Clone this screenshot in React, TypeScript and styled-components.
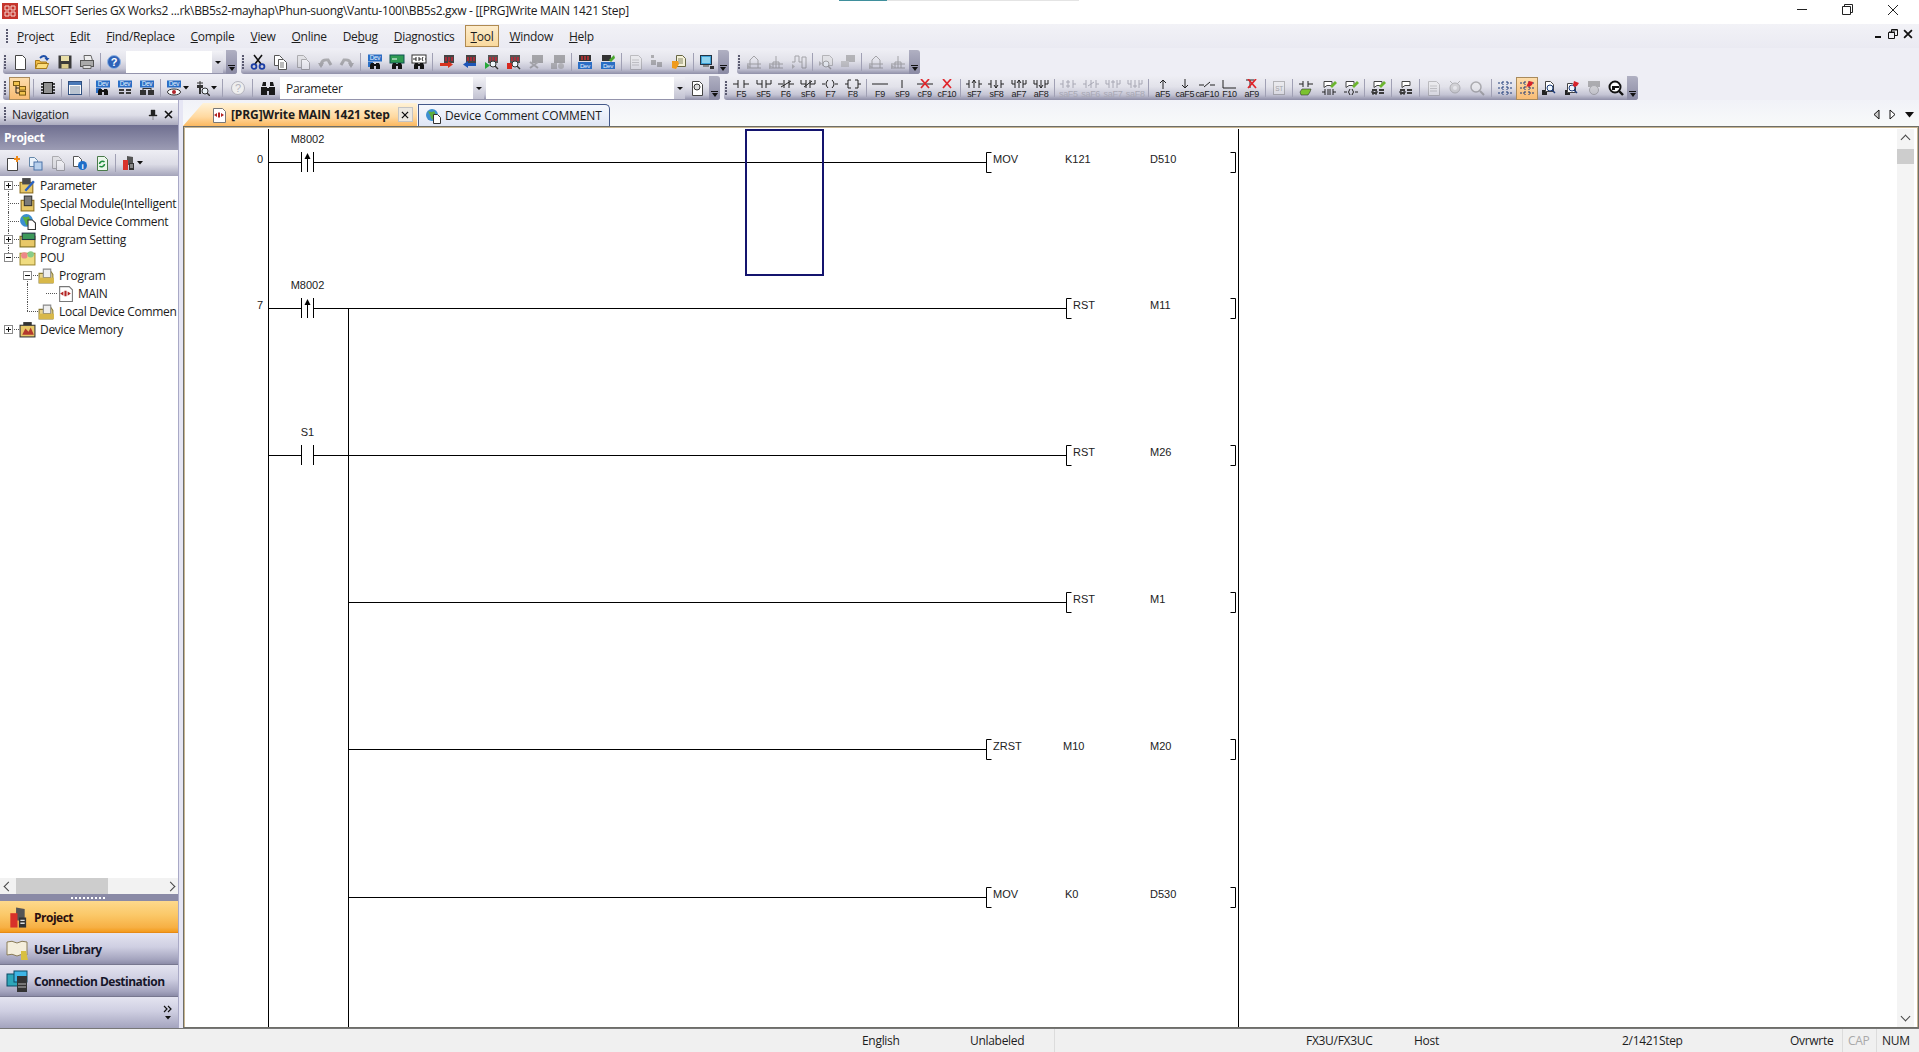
import React from "react";
import styled, { createGlobalStyle } from "styled-components";

const UI_FONT = `"Open Sans", "Noto Sans", "Liberation Sans", sans-serif`;
const DRAW_FONT = `"Liberation Sans", Arial, sans-serif`;

const GlobalStyle = createGlobalStyle`
  html, body { margin: 0; padding: 0; background: #eeeef5; overflow: hidden; }
  #root { width: 1919px; height: 1052px; }
  * { box-sizing: border-box; }
`;

const Page = styled.div`
  position: relative;
  width: 1919px;
  height: 1052px;
  display: flex;
  flex-direction: column;
  font-family: ${UI_FONT};
  font-size: 12px;
  letter-spacing: -0.3px;
  color: #1c1c1c;
  background: #eeeef5;
  overflow: hidden;
`;

/* title bar */
const TitleBar = styled.div`
  position: relative;
  height: 24px;
  background: #fff;
  display: flex;
  align-items: center;
  padding-left: 2px;
  flex: none;
`;
const TaskStrip = styled.div`
  position: absolute;
  top: 0;
  left: 839px;
  width: 48px;
  height: 1px;
  background: #3f8f9c;
  box-shadow: 48px 0 0 #e4e4e4, 96px 0 0 #e4e4e4, 144px 0 0 #e4e4e4, 192px 0 0 #e4e4e4;
`;
const TitleText = styled.span`
  margin-left: 4px;
  white-space: nowrap;
  margin-top: -3px;
`;
const WindowButtons = styled.div`
  margin-left: auto;
  display: flex;
  margin-top: -4px;
  padding-right: 3px;
`;
const WindowButton = styled.span`
  width: 45.5px;
  display: flex;
  justify-content: center;
`;

/* menu bar */
const MenuBar = styled.div`
  height: 24px;
  flex: none;
  display: flex;
  align-items: center;
  padding-left: 5px;
  background: linear-gradient(#f2f2f7, #eaeaf2);
`;
const Grip = styled.span`
  flex: none;
  width: 3px;
  height: 15px;
  margin: 0 2px 0 1px;
  background-image: radial-gradient(circle at 1px 1px, #5a5a70 1px, transparent 1.2px);
  background-size: 3px 3px;
`;
const MenuItem = styled.span<{ $active?: boolean }>`
  height: 22px;
  padding: 0 5px;
  margin-right: 4px;
  display: flex;
  align-items: center;
  white-space: nowrap;
  border: 1px solid ${(p) => (p.$active ? "#b08a50" : "transparent")};
  background: ${(p) => (p.$active ? "linear-gradient(#fdeccb, #f9d99e)" : "transparent")};
`;
const MdiButtons = styled.div`
  margin-left: auto;
  display: flex;
  gap: 5px;
  padding-right: 6px;
  margin-top: -4px;
`;

/* toolbars */
const ToolRow = styled.div`
  height: 24px;
  margin-top: 2px;
  flex: none;
  display: flex;
  align-items: stretch;
  padding-left: 3px;
`;
const Toolbar = styled.div<{ $gap?: number }>`
  display: flex;
  align-items: center;
  height: 24px;
  margin-right: ${(p) => p.$gap ?? 4}px;
  border-radius: 3px;
  background: linear-gradient(#eeeef4 0%, #e2e2ea 45%, #c4c4d4 78%, #8f8fa8 100%);
`;
const Slot = styled.span<{ $active?: boolean; $w?: number }>`
  flex: none;
  width: ${(p) => p.$w ?? 22.3}px;
  height: 23px;
  display: flex;
  align-items: center;
  justify-content: center;
  border: 1px solid ${(p) => (p.$active ? "#a98a5c" : "transparent")};
  background: ${(p) => (p.$active ? "linear-gradient(#fddcaa, #f7bc74)" : "transparent")};
`;
const Sep = styled.span<{ $w?: number }>`
  flex: none;
  width: ${(p) => p.$w ?? 5}px;
  height: 18px;
  display: flex;
  justify-content: center;
  &::after {
    content: "";
    width: 1px;
    height: 100%;
    background: #a0a0b4;
  }
`;
const Overflow = styled.span<{ $ml?: number }>`
  flex: none;
  width: 11px;
  height: 24px;
  margin-left: ${(p) => p.$ml ?? 0}px;
  border-radius: 0 3px 3px 0;
  background: linear-gradient(#b0b0c2, #8a8aa4);
  display: flex;
  flex-direction: column;
  align-items: center;
  justify-content: flex-end;
  padding-bottom: 3px;
  &::before {
    content: "";
    width: 7px;
    height: 1px;
    background: #111;
    margin-bottom: 1px;
  }
  &::after {
    content: "";
    border-left: 3.5px solid transparent;
    border-right: 3.5px solid transparent;
    border-top: 4px solid #111;
  }
`;
const Combo = styled.span<{ $w: number; $ml?: number }>`
  flex: none;
  width: ${(p) => p.$w}px;
  margin-left: ${(p) => p.$ml ?? 0}px;
  height: 22px;
  background: #fff;
  display: flex;
  align-items: center;
  justify-content: space-between;
  padding-left: 6px;
  white-space: nowrap;
  font-size: 12px;
`;
const ComboArrow = styled.span`
  width: 11px;
  height: 22px;
  background: linear-gradient(#f2f2f6, #c2c2d2);
  display: flex;
  align-items: center;
  justify-content: center;
  &::after {
    content: "";
    border-left: 3px solid transparent;
    border-right: 3px solid transparent;
    border-top: 3px solid #111;
  }
`;
const KeyLabel = styled.span<{ $muted?: boolean }>`
  display: block;
  font-family: ${DRAW_FONT};
  font-size: 9px;
  line-height: 10px;
  letter-spacing: -0.3px;
  color: ${(p) => (p.$muted ? "#a8a8b4" : "#222")};
  white-space: nowrap;
`;
const KeySlot = styled(Slot)`
  flex-direction: column;
  justify-content: flex-start;
  padding-top: 1px;
`;

/* main area */
const Main = styled.div`
  flex: 1;
  min-height: 0;
  display: flex;
`;
const Nav = styled.div`
  flex: none;
  width: 179px;
  padding-top: 3px;
  display: flex;
  flex-direction: column;
  background: #fff;
  border-right: 1px solid #a9a9c6;
`;
const NavHeader = styled.div`
  height: 22px;
  flex: none;
  display: flex;
  align-items: center;
  padding-left: 3px;
  font-size: 12px;
  background: linear-gradient(#ecedf3, #dedee8 55%, #aaaabe);
`;
const NavTitle = styled.span`
  margin-left: 3px;
`;
const NavClose = styled.span`
  margin-left: auto;
  display: flex;
  gap: 6px;
  padding-right: 5px;
  align-items: center;
`;
const ProjectHeader = styled.div`
  height: 25px;
  flex: none;
  display: flex;
  align-items: center;
  padding-left: 4px;
  color: #fff;
  font-weight: 700;
  font-size: 12px;
  background: linear-gradient(#6f6f90, #9c9cb4);
`;
const NavTools = styled.div`
  height: 26px;
  flex: none;
  display: flex;
  align-items: center;
  padding-left: 2px;
  background: linear-gradient(#eeeef4, #dcdce6 55%, #a4a4ba);
`;
const Tree = styled.div`
  flex: 1;
  min-height: 0;
  overflow: hidden;
  background: #fff;
`;
const TreeRow = styled.div`
  height: 18px;
  display: flex;
  align-items: center;
  white-space: nowrap;
  font-size: 12px;
`;
const Guide = styled.span<{ $up?: boolean; $down?: boolean; $right?: boolean }>`
  position: relative;
  flex: none;
  width: 19px;
  height: 18px;
  &::before {
    content: "";
    position: absolute;
    left: 8px;
    top: ${(p) => (p.$up ? "0" : "9px")};
    bottom: ${(p) => (p.$down ? "0" : "9px")};
    border-left: 1px dotted #555;
  }
  &::after {
    content: "";
    position: absolute;
    left: 8px;
    top: 9px;
    width: ${(p) => (p.$right ? "11px" : "0")};
    border-top: 1px dotted #555;
  }
`;
const Expander = styled.span`
  position: absolute;
  z-index: 1;
  left: 4px;
  top: 5px;
  width: 9px;
  height: 9px;
  background: #fff;
  border: 1px solid #8a8a8a;
  &::before {
    content: "";
    position: absolute;
    left: 1px;
    top: 3px;
    width: 5px;
    height: 1px;
    background: #111;
  }
`;
const Plus = styled(Expander)`
  &::after {
    content: "";
    position: absolute;
    left: 3px;
    top: 1px;
    width: 1px;
    height: 5px;
    background: #111;
  }
`;
const TreeIcon = styled.span`
  flex: none;
  width: 17px;
  height: 17px;
  margin-right: 4px;
  display: flex;
`;
const HScroll = styled.div`
  height: 16px;
  flex: none;
  display: flex;
  align-items: center;
  background: #f2f2f2;
`;
const ScrollArrow = styled.span<{ $right?: boolean }>`
  width: 16px;
  height: 16px;
  flex: none;
  display: flex;
  align-items: center;
  justify-content: center;
  margin-left: ${(p) => (p.$right ? "auto" : "0")};
  &::after {
    content: "";
    width: 6px;
    height: 6px;
    border-left: 1.6px solid #444;
    border-bottom: 1.6px solid #444;
    transform: rotate(${(p) => (p.$right ? "225deg" : "45deg")});
  }
`;
const HThumb = styled.span`
  width: 92px;
  height: 16px;
  background: #cdcdcd;
`;
const PaneGrip = styled.div`
  height: 7px;
  flex: none;
  background: #8a8aa6;
  display: flex;
  align-items: center;
  justify-content: center;
  &::after {
    content: "";
    width: 36px;
    height: 2px;
    background-image: radial-gradient(circle at 1px 1px, #fff 1px, transparent 1.2px);
    background-size: 4px 2px;
  }
`;
const PaneButton = styled.div<{ $active?: boolean }>`
  height: 32px;
  flex: none;
  display: flex;
  align-items: center;
  font-weight: 700;
  font-size: 12px;
  padding: 1px 0 0 6px;
  gap: 5px;
  white-space: nowrap;
  letter-spacing: -0.5px;
  color: ${(p) => (p.$active ? "#2a0f0f" : "#16162a")};
  border-bottom: 1px solid ${(p) => (p.$active ? "#e78a14" : "#77778f")};
  background: ${(p) =>
    p.$active
      ? "linear-gradient(#fdd98c, #fbc868 45%, #f7b044 85%, #f39a1c)"
      : "linear-gradient(#e4e4f0, #cfcfe2 45%, #a4a4be 85%, #8c8ca8)"};
`;
const PaneFooter = styled.div`
  flex: none;
  height: 31px;
  display: flex;
  justify-content: flex-end;
  align-items: center;
  padding-right: 4px;
  background: linear-gradient(#e4e4f0, #cfcfe2 45%, #a4a4be);
`;
const Gutter = styled.div`
  flex: none;
  width: 4px;
  background: #e6e6f4;
`;

const Workspace = styled.div`
  flex: 1;
  min-width: 0;
  display: flex;
  flex-direction: column;
`;
const TabStrip = styled.div`
  height: 26px;
  flex: none;
  display: flex;
  align-items: flex-end;
  padding-top: 3px;
  background: linear-gradient(#f1f2f8, #f8fafa);
`;
const ActiveTab = styled.div`
  flex: none;
  width: 234px;
  height: 23px;
  display: flex;
  align-items: center;
  padding-left: 28px;
  font-weight: 700;
  font-size: 12px;
  letter-spacing: -0.12px;
  white-space: nowrap;
  clip-path: polygon(20px 0, 100% 0, 100% 100%, 0 100%);
  background: linear-gradient(#fff3d8, #ffd9a0 60%, #fbb860);
`;
const TabText = styled.span`
  margin-left: 4px;
`;
const TabClose = styled.span`
  margin-left: 8px;
  width: 15px;
  height: 15px;
  border: 1px solid #c4c4c4;
  background: #ece8e0;
  display: flex;
  align-items: center;
  justify-content: center;
`;
const Tab = styled.div`
  flex: none;
  width: 192px;
  margin-left: 1px;
  height: 22px;
  display: flex;
  align-items: center;
  padding-left: 6px;
  gap: 4px;
  border: 1px solid #44598a;
  border-bottom: none;
  border-radius: 0 5px 0 0;
  white-space: nowrap;
  letter-spacing: -0.12px;
  background: linear-gradient(#f6f8fd, #dfe6f5);
`;
const TabNav = styled.div`
  margin-left: auto;
  display: flex;
  gap: 9px;
  align-items: center;
  padding: 0 5px 6px 0;
`;
const Editor = styled.div`
  flex: 1;
  min-height: 0;
  display: flex;
  background: #fff;
  border: 2px solid #c8b692;
  border-bottom-width: 1px;
  outline: 1px solid #6e6e68;
  outline-offset: -1px;
  padding: 1px 3px 0 1px;
`;
const LadderSvg = styled.svg`
  display: block;
  flex: 1;
  min-width: 0;
  height: 100%;
  font-family: ${DRAW_FONT};
  font-size: 11px;
  letter-spacing: 0;
`;
const VScroll = styled.div`
  flex: none;
  width: 17px;
  display: flex;
  flex-direction: column;
  align-items: center;
  background: #f4f4f4;
`;
const VArrow = styled.span<{ $down?: boolean }>`
  flex: none;
  height: 17px;
  width: 17px;
  display: flex;
  align-items: center;
  justify-content: center;
  margin-top: ${(p) => (p.$down ? "auto" : "0")};
  &::after {
    content: "";
    width: 6px;
    height: 6px;
    border-left: 1.6px solid #444;
    border-top: 1.6px solid #444;
    transform: translateY(${(p) => (p.$down ? "-2px" : "2px")}) rotate(${(p) => (p.$down ? "225deg" : "45deg")});
  }
`;
const VThumb = styled.span`
  flex: none;
  width: 17px;
  height: 15px;
  margin-top: 3px;
  background: #cdcdcd;
`;

/* status bar */
const StatusBar = styled.div`
  height: 24px;
  flex: none;
  display: grid;
  grid-template-columns: 854px 108px 92px 244px 108px 208px 168px 60px 34px 1fr;
  align-items: center;
  background: #f0f0f0;
  border-top: 1px solid #777;
  font-size: 12px;
`;
const StatusPane = styled.span<{ $muted?: boolean; $line?: boolean }>`
  padding-left: ${(p) => (p.$line ? "5px" : "8px")};
  color: ${(p) => (p.$muted ? "#a9a9a9" : "#1c1c1c")};
  height: 100%;
  display: flex;
  align-items: center;
  border-left: ${(p) => (p.$line ? "1px solid #dcdcdc" : "none")};
  white-space: nowrap;
`;

/* shared drawing pieces */
const Binoculars = () => (
  <path fill="#141414" d="M4 9h3v6H3v-4zM9 9h3l1 2v4H9zM7 10h2v2H7z" />
);
const DevTag = () => (
  <>
    <rect x="1" y="0.5" width="14" height="7" fill="#2a6ec4" />
    <text x="8" y="6.4" fontSize="6.4" fontFamily={DRAW_FONT} textAnchor="middle" fill="#e8f2ff">Dev</text>
  </>
);
const Doc = ({ x = 3, y = 1, w = 10, h = 14, s = "#333", f = "#fff" }) => (
  <path d={`M${x + 0.5} ${y + 0.5}h${w - 3}l3 3v${h - 3}h-${w}z`} fill={f} stroke={s} />
);
const Grid = ({ y = 9, c = "#3a3a3a" }) => (
  <path fill={c} d={`M2 ${y}h5v2H2zM9 ${y}h5v2H9zM2 ${y + 3}h5v2H2zM9 ${y + 3}h5v2H9z`} />
);
const PlcBlock = ({ c = "#444" }) => (
  <>
    <rect x="5" y="1" width="10" height="8" fill={c} />
    <path stroke="#c23" strokeWidth="1.4" d="M7 3v4M10 3v4M13 3v4" />
  </>
);
const Lens = ({ x = 10, y = 10, c = "#333" }) => (
  <>
    <circle cx={x} cy={y} r="3" fill="#eef6fb" stroke={c} />
    <path stroke={c} strokeWidth="1.4" d={`M${x + 2} ${y + 2}l3 3`} />
  </>
);
const GreyFade = ({ children }: { children: React.ReactNode }) => <g opacity="0.45">{children}</g>;
const FolderSheet = () => (
  <>
    <path d="M1 6h4l1-2h6l2 3v8H1z" fill="#e9d48a" stroke="#8a7a30" />
    <path d="M5 2h7v8H5z" fill="#eee" stroke="#888" />
    <rect x="1" y="10" width="14" height="5" fill="#d8b84a" />
  </>
);
const ProgramDoc = () => (
  <>
    <Doc x={2} y={1} w={12} h={14} s="#777" />
    <path d="M3 8l3-2v4zM13 8l-3-2v4zM7 5.5h2v5H7z" fill="#b32322" />
  </>
);
const GlobeDoc = () => (
  <>
    <circle cx="7" cy="7" r="6" fill="#3c8fd0" />
    <path d="M3 3q4 2 6 0l2 4-4 5-2-5z" fill="#5cae3e" />
    <Doc x={8} y={6} w={7} h={9} s="#333" />
  </>
);

const ICONS: Record<string, React.ReactNode> = {
  new: <Doc x={3} y={1} w={10} h={14} s="#444" />,
  open: (
    <>
      <path fill="#f1bd46" stroke="#a87a18" d="M1.5 6.5h4l1 1.5h6v6.5h-11z" />
      <path fill="#fbdd7c" stroke="#a87a18" d="M1.5 14.5l2-5h11l-2 5z" />
      <path fill="none" stroke="#1e4fa8" strokeWidth="1.8" d="M6 4Q10 0 13 4" />
      <path fill="#1e4fa8" d="M10.5 4h5l-2.5 3z" />
    </>
  ),
  save: (
    <>
      <rect x="1.5" y="1.5" width="13" height="13" fill="#3a3a3a" />
      <rect x="4" y="2" width="8" height="5" fill="#e9dfa8" />
      <rect x="4.5" y="10" width="7" height="4.5" fill="#d8c98c" />
    </>
  ),
  print: (
    <>
      <path fill="#eee" stroke="#666" d="M5 1.5h7l1.5 5h-8z" />
      <rect x="1.5" y="6.5" width="13" height="6" fill="#aaa" stroke="#555" />
      <path fill="#ddd" stroke="#666" d="M4 11.5h8v3H4z" />
    </>
  ),
  help: (
    <>
      <circle cx="8" cy="8" r="6.5" fill="#2e62b8" stroke="#8fb4e4" />
      <text x="8" y="12" fontSize="11" fontWeight="700" fontFamily={DRAW_FONT} textAnchor="middle" fill="#fff">?</text>
    </>
  ),
  helpOff: (
    <>
      <circle cx="8" cy="8" r="6.5" fill="#eee" stroke="#b4b4be" />
      <text x="8" y="12" fontSize="11" fontFamily={DRAW_FONT} textAnchor="middle" fill="#b4b4be">?</text>
    </>
  ),
  cut: (
    <>
      <path stroke="#111" strokeWidth="1.6" d="M4 1l7 9M12 1L5 10" />
      <circle cx="4" cy="12.5" r="2.4" fill="none" stroke="#1c3fa6" strokeWidth="1.8" />
      <circle cx="12" cy="12.5" r="2.4" fill="none" stroke="#1c3fa6" strokeWidth="1.8" />
    </>
  ),
  copy: (
    <>
      <Doc x={2} y={1} w={8} h={10} s="#555" />
      <Doc x={6} y={5} w={8} h={10} s="#555" />
      <path stroke="#777" d="M8 9h4M8 11h4M8 13h4" />
    </>
  ),
  paste: (
    <GreyFade>
      <Doc x={2} y={1} w={9} h={12} s="#666" f="#ddd" />
      <Doc x={6} y={5} w={8} h={10} s="#666" />
    </GreyFade>
  ),
  undo: (
    <GreyFade>
      <path fill="none" stroke="#666" strokeWidth="3" d="M4 12Q4 5 11 6l3 5" />
      <path fill="#666" d="M1 9h6l-3 5z" />
    </GreyFade>
  ),
  redo: (
    <GreyFade>
      <path fill="none" stroke="#666" strokeWidth="3" d="M12 12Q12 5 5 6l-3 5" />
      <path fill="#666" d="M9 9h6l-3 5z" />
    </GreyFade>
  ),
  devFind: (
    <>
      <DevTag />
      <rect x="1" y="8" width="5" height="5" fill="#2a6ec4" />
      <Binoculars />
    </>
  ),
  gotoFind: (
    <>
      <rect x="1" y="1" width="14" height="8" fill="#2f9a52" stroke="#155" />
      <path stroke="#fff" d="M3 5h5" />
      <Binoculars />
    </>
  ),
  ladderFind: (
    <>
      <rect x="1" y="1" width="14" height="8" fill="#fff" stroke="#333" />
      <path stroke="#222" fill="none" d="M2 5h3M5 3v4M8 3v4M8 5h2M12 3q-2 2 0 4M14 5h1" />
      <Binoculars />
    </>
  ),
  writeTo: (
    <>
      <PlcBlock />
      <path fill="#d8331f" d="M1 9h8V7l5 3.5L9 14v-2H1z" />
    </>
  ),
  readFrom: (
    <>
      <PlcBlock />
      <path fill="#1e56b8" d="M15 9H7V7L2 10.5 7 14v-2h8z" />
    </>
  ),
  verifyG: (
    <>
      <PlcBlock c="#555" />
      <path fill="#26a83a" d="M2 8l5 3.5L2 15z" />
      <Lens x={10} y={10} />
    </>
  ),
  verifyR: (
    <>
      <PlcBlock c="#555" />
      <rect x="2" y="9" width="5" height="6" fill="#d8281f" />
      <Lens x={10} y={10} />
    </>
  ),
  greyA: (
    <GreyFade>
      <rect x="4" y="1" width="11" height="8" fill="#555" />
      <path stroke="#666" strokeWidth="2" d="M2 8l8 6M2 14l8-6" />
    </GreyFade>
  ),
  greyB: (
    <GreyFade>
      <rect x="4" y="1" width="11" height="8" fill="#555" />
      <rect x="1" y="9" width="6" height="6" fill="#777" />
      <circle cx="11" cy="12" r="3" fill="#888" />
    </GreyFade>
  ),
  devDown: (
    <>
      <rect x="2" y="1" width="12" height="6" fill="#333" />
      <path stroke="#d33" strokeWidth="1.3" d="M5 2v4M8 2v4M11 2v4" />
      <rect x="1" y="8" width="14" height="7" fill="#2a6ec4" />
      <text x="8" y="14" fontSize="6.2" fontFamily={DRAW_FONT} textAnchor="middle" fill="#e8f2ff">Dev</text>
    </>
  ),
  devUp: (
    <>
      <rect x="2" y="1" width="9" height="6" fill="#333" />
      <path fill="#4aa82e" d="M9 6l5-5 1 3-4 4z" />
      <rect x="1" y="8" width="14" height="7" fill="#2a6ec4" />
      <text x="8" y="14" fontSize="6.2" fontFamily={DRAW_FONT} textAnchor="middle" fill="#e8f2ff">Dev</text>
    </>
  ),
  pageOff: (
    <GreyFade>
      <Doc x={3} y={1} w={11} h={14} s="#888" f="#eee" />
      <path stroke="#999" d="M5 6h7M5 8.5h7M5 11h7" />
    </GreyFade>
  ),
  greySquares: (
    <GreyFade>
      <path fill="#666" d="M2 6h5v5H2zM8 8h5v5H8zM2 1h3v3H2z" />
    </GreyFade>
  ),
  orangeDocs: (
    <>
      <Doc x={5} y={1} w={9} h={11} s="#664" f="#f4f0d8" />
      <path stroke="#886" d="M7 5h5M7 7h5M7 9h5" />
      <path fill="#ef9b1e" d="M1 7h6l1 3-3 5-4-1z" />
    </>
  ),
  monitor: (
    <>
      <rect x="1.5" y="1.5" width="11" height="9" fill="#3fa2d8" stroke="#234" />
      <rect x="3" y="3" width="8" height="6" fill="#8ed2ee" />
      <path fill="#888" d="M4 11h6v2H4z" />
      <rect x="11" y="12" width="4" height="3" fill="#333" />
    </>
  ),
  wave1: (
    <GreyFade>
      <path fill="none" stroke="#555" d="M1 14H15M4 14V6L8 2l4 4v8M1 10H15" />
      <path fill="#777" d="M1 10l3 2.5L1 15z" />
    </GreyFade>
  ),
  wave2: (
    <GreyFade>
      <path fill="none" stroke="#555" d="M1 14H15M5 14V8h6v6M8 2v12M1 10H15" />
      <path fill="#777" d="M1 10l3 2.5L1 15z" />
    </GreyFade>
  ),
  wave3: (
    <GreyFade>
      <path fill="none" stroke="#555" d="M1 8h3V2h4v6h3V3h4v11h-4V8" />
      <path fill="#777" d="M1 10l3 2.5L1 15z" />
    </GreyFade>
  ),
  lensOff: (
    <GreyFade>
      <Doc x={4} y={1} w={10} h={10} s="#777" f="#ddd" />
      <Lens x={8} y={10} c="#555" />
      <path fill="#777" d="M1 7l3 2.5L1 12z" />
    </GreyFade>
  ),
  docOff: (
    <GreyFade>
      <rect x="6" y="1" width="9" height="7" fill="#777" />
      <path fill="#999" d="M1 7h8v6H1z" />
    </GreyFade>
  ),
  tree: (
    <>
      <rect x="1.5" y="1.5" width="6" height="4" fill="#f1c24e" stroke="#7a5a12" />
      <rect x="7.5" y="6.5" width="6" height="3.6" fill="#f1c24e" stroke="#7a5a12" />
      <rect x="7.5" y="11.5" width="6" height="3.6" fill="#f1c24e" stroke="#7a5a12" />
      <path fill="none" stroke="#222" d="M4 6v7h3M4 8h3" />
    </>
  ),
  chip: (
    <>
      <rect x="3.5" y="2.5" width="9" height="11" fill="#8f8f8f" stroke="#111" />
      <path stroke="#111" strokeWidth="1.4" d="M1 4h2M1 7h2M1 10h2M1 13h2M13 4h2M13 7h2M13 10h2M13 13h2" />
    </>
  ),
  list: (
    <>
      <rect x="1.5" y="1.5" width="13" height="13" fill="#fafafa" stroke="#2f4f80" />
      <rect x="2" y="2" width="12" height="3" fill="#4a79b8" />
      <path stroke="#7a8ea8" d="M3 7h10M3 9h10M3 11h10M3 13h10" />
    </>
  ),
  devGrid: (
    <>
      <DevTag />
      <Grid />
    </>
  ),
  devNet: (
    <>
      <DevTag />
      <path fill="#333" d="M1 10h6v5H1zM9 10h6v5H9z" />
      <path stroke="#333" d="M4 8v2M12 8v2M4 8.5h8" />
    </>
  ),
  devEye: (
    <>
      <DevTag />
      <ellipse cx="8" cy="12" rx="6.5" ry="3" fill="#fff" stroke="#333" />
      <circle cx="8" cy="12" r="2" fill="#b0242a" />
    </>
  ),
  probe: (
    <>
      <path fill="#333" d="M3 5h6v3H7v6H5V8H3z" />
      <path stroke="#333" d="M6 1v4M3 3h6" />
      <Lens x={11} y={11} />
    </>
  ),
  bino: (
    <path fill="#1a1a1a" d="M2 6l1-4h3v4zM10 6V2h3l1 4zM1 7h6v8H1zM9 7h6v8H9zM7 8h2v3H7z" />
  ),
  docTag: (
    <>
      <Doc x={3} y={1} w={10} h={14} s="#444" />
      <circle cx="8" cy="7" r="3" fill="#ddd" stroke="#333" />
    </>
  ),
  st: (
    <GreyFade>
      <rect x="2.5" y="1.5" width="11" height="13" fill="#eee" stroke="#777" />
      <text x="8" y="11" fontSize="6.5" fontFamily={DRAW_FONT} textAnchor="middle" fill="#555">ST</text>
    </GreyFade>
  ),
  editRung: (
    <>
      <path stroke="#222" fill="none" d="M1 4H5M5 1V7M10 1V7M10 4H15" />
      <path fill="#7cc22f" stroke="#333" strokeWidth=".6" d="M2 12l2-3h9l-1 3-2 3H3z" />
    </>
  ),
  noteA: (
    <>
      <path fill="#fff" stroke="#444" d="M3 1.5h8v4H6l-3 2z" />
      <path fill="#6cb52f" d="M9 6l5-5 2 2-5 5z" />
      <path stroke="#222" fill="none" d="M1 12H4M4 9V15M7 9V15M9 9V15M12 9V15M12 12H15" />
    </>
  ),
  noteB: (
    <>
      <path fill="#fff" stroke="#444" d="M3 1.5h8v4H6l-3 2z" />
      <path fill="#6cb52f" d="M9 6l5-5 2 2-5 5z" />
      <path stroke="#222" fill="none" d="M1 12H4M7 9Q4 12 7 15M9 9Q12 12 9 15M12 12H15" />
    </>
  ),
  noteC: (
    <>
      <path fill="#fff" stroke="#444" d="M4 1.5h8v4H7l-3 2z" />
      <path fill="#6cb52f" d="M9 6l5-5 2 2-5 5z" />
      <path stroke="#222" fill="none" d="M1 12H3M3 9V15M6 9V15M6 12H8" />
      <Grid y={9} />
    </>
  ),
  noteD: (
    <>
      <path fill="#fff" stroke="#444" d="M4 1.5h8v4H7l-3 2z" />
      <path stroke="#222" fill="none" d="M1 12H3M3 9V15M6 9V15M6 12H8" />
      <Grid y={9} />
    </>
  ),
  watchOff: (
    <GreyFade>
      <circle cx="8" cy="8" r="5" fill="#bbb" stroke="#777" />
      <circle cx="8" cy="8" r="2" fill="#eee" />
      <path stroke="#777" d="M3 1l3 3M13 1l-3 3" />
    </GreyFade>
  ),
  lensOff2: (
    <GreyFade>
      <circle cx="7" cy="7" r="5" fill="#eee" stroke="#666" strokeWidth="1.5" />
      <path stroke="#666" strokeWidth="2" d="M11 11l4 4" />
    </GreyFade>
  ),
  contacts: (
    <path stroke="#1c3a78" fill="none" d="M1 3H6M6 1V5M10 1V5M10 3H15M1 8H6M6 6V10M10 6V10M10 8H15M1 13H6M6 11V15M10 11V15M10 13H15" strokeDasharray="2 1" />
  ),
  contactsPin: (
    <>
      <path stroke="#1c3a78" fill="none" d="M1 3H6M6 1V5M10 1V5M10 3H15M1 8H6M6 6V10M10 6V10M10 8H15M1 13H6M6 11V15M10 11V15M10 13H15" strokeDasharray="2 1" />
      <path fill="#d8232a" d="M10 1l4 1-1 3-3 2-1-1-2 2 1-3z" />
    </>
  ),
  docLens: (
    <>
      <rect x="1" y="10" width="5" height="5" fill="#222" />
      <Doc x={4} y={1} w={8} h={10} s="#444" />
      <Lens x={9} y={8} c="#1c3a78" />
    </>
  ),
  docPin: (
    <>
      <rect x="1" y="10" width="5" height="5" fill="#222" />
      <Doc x={3} y={3} w={8} h={9} s="#444" />
      <Lens x={8} y={8} c="#1c3a78" />
      <path fill="#d8232a" d="M10 1l5 2-2 3-3 1-1-2z" />
    </>
  ),
  watchGrey: (
    <GreyFade>
      <rect x="2" y="1" width="12" height="6" fill="#666" />
      <circle cx="8" cy="10" r="4.5" fill="#bbb" stroke="#666" />
    </GreyFade>
  ),
  zoom: (
    <>
      <circle cx="7" cy="7" r="5.5" fill="#fff" stroke="#111" strokeWidth="2" />
      <path fill="#111" d="M4 6h7v2H7v2H4z" />
      <path stroke="#111" strokeWidth="2.4" d="M11 11l4 4" />
    </>
  ),
  parameter: (
    <>
      <rect x="1" y="5" width="12" height="10" fill="#e8c868" stroke="#8a6a1c" />
      <rect x="3" y="1" width="8" height="6" fill="#4a4a4a" />
      <path stroke="#2a62c4" strokeWidth="2.2" d="M6 13l8-9" />
    </>
  ),
  plcFolder: (
    <>
      <rect x="2" y="5" width="12" height="10" fill="#e8c868" stroke="#8a6a1c" />
      <rect x="5" y="1" width="7" height="9" fill="#7a7a7a" stroke="#333" />
    </>
  ),
  addItem: (
    <>
      <Doc x={2} y={3} w={10} h={12} s="#444" />
      <path stroke="#ee8a1a" strokeWidth="2" d="M12 1v6M9 4h6" />
    </>
  ),
  copySheet: (
    <>
      <Doc x={2} y={2} w={8} h={9} s="#6688aa" f="#eaf2fa" />
      <rect x="7" y="7" width="8" height="8" fill="#b8d0ec" stroke="#4a72a8" />
    </>
  ),
  infoDoc: (
    <>
      <Doc x={1} y={1} w={8} h={10} s="#555" />
      <circle cx="10.5" cy="10.5" r="4.5" fill="#1e6ec8" />
      <text x="10.5" y="14" fontSize="8" fontWeight="700" fontFamily={DRAW_FONT} textAnchor="middle" fill="#fff">i</text>
    </>
  ),
  refreshDoc: (
    <>
      <Doc x={3} y={1} w={10} h={14} s="#4a7a4a" f="#eaf6ea" />
      <path fill="none" stroke="#1c8a3a" strokeWidth="1.6" d="M5.5 9a3 3 0 0 1 5-2M10.5 9a3 3 0 0 1-5 2" />
    </>
  ),
  project: (
    <>
      <path fill="#555" d="M7 1l6 1v8H7z" />
      <path fill="#d8322a" d="M3 5h5v10H3z" />
      <rect x="9" y="8" width="5" height="7" fill="#333" />
      <path stroke="#ddd" d="M10 10h3M10 12h3" />
    </>
  ),
  globeDoc: <GlobeDoc />,
  programSetting: (
    <>
      <rect x="1" y="5" width="14" height="10" fill="#e8c868" stroke="#7a6a1c" />
      <rect x="3" y="2" width="12" height="6" fill="#3d9a5a" stroke="#234" />
    </>
  ),
  pou: (
    <>
      <rect x="1" y="4" width="14" height="11" fill="#f0dc80" stroke="#a08a30" />
      <circle cx="5" cy="6" r="3" fill="#e88" />
      <circle cx="11" cy="5" r="3" fill="#8c8" />
    </>
  ),
  folderSheet: <FolderSheet />,
  programDoc: <ProgramDoc />,
  deviceMemory: (
    <>
      <rect x="1" y="4" width="14" height="11" fill="#e8c868" stroke="#333" />
      <path d="M3 13l3-6 3 3 2-4 3 7z" fill="#b3392e" />
      <rect x="4" y="1" width="8" height="3" fill="#333" />
    </>
  ),
};

const Icon = ({ name, size = 16 }: { name: string; size?: number }) => (
  <svg width={size} height={size} viewBox="0 0 16 16" style={{ flex: "none" }}>
    {ICONS[name]}
  </svg>
);

const Caret = () => (
  <svg width="6" height="4" viewBox="0 0 6 4" style={{ flex: "none", marginLeft: 1 }}>
    <path d="M0 0h6L3 3.5z" fill="#111" />
  </svg>
);

const Tools = ({ items }: { items: string[] }) => (
  <>
    {items.map((name, i) =>
      name === "|" ? (
        <Sep key={i} />
      ) : (
        <Slot key={i}>
          <Icon name={name} />
        </Slot>
      )
    )}
  </>
);

/* function key buttons: contact glyph above the key name */
type KeyDef = { label: string; d?: string; cross?: boolean; muted?: boolean; sep?: boolean };
const KEYS: KeyDef[] = [
  { label: "F5", d: "M1 5H6M6 1V9M12 1V9M12 5H17" },
  { label: "sF5", d: "M2 1V5H7M7 1V9M11 1V9M11 5H16V1" },
  { label: "F6", d: "M1 5H6M7 1V9M12 1V9M12 5H17M4 8L14 2" },
  { label: "sF6", d: "M2 1V5H7M7 1V9M11 1V9M11 5H16V1M5 8L13 2" },
  { label: "F7", d: "M1 5H4M7 1Q3 5 7 9M11 1Q15 5 11 9M14 5H17" },
  { label: "F8", d: "M1 5H4M7 1H4V9H7M11 1H14V9H11M14 5H17" },
  { label: "|", sep: true },
  { label: "F9", d: "M1 5H17" },
  { label: "sF9", d: "M9 1V9" },
  { label: "cF9", d: "M1 5H17", cross: true },
  { label: "cF10", cross: true },
  { label: "|", sep: true },
  { label: "sF7", d: "M1 5H4M4 1V9M14 1V9M14 5H17M9 9V1M7 4L9 1L11 4" },
  { label: "sF8", d: "M1 5H4M4 1V9M14 1V9M14 5H17M9 9V1M7 6L9 9L11 6" },
  { label: "aF7", d: "M2 1V5H5M5 1V9M13 1V9M13 5H16V1M9 9V1M7 4L9 1L11 4" },
  { label: "aF8", d: "M2 1V5H5M5 1V9M13 1V9M13 5H16V1M9 9V1M7 6L9 9L11 6" },
  { label: "|", sep: true },
  { label: "saF5", d: "M1 5H4M4 1V9M14 1V9M14 5H17M9 9V1M7 3L11 3M7 7L11 7", muted: true },
  { label: "saF6", d: "M1 5H4M4 1V9M14 1V9M14 5H17M9 9V1M6 7L12 3", muted: true },
  { label: "saF7", d: "M2 1V5H5M5 1V9M13 1V9M13 5H16V1M9 9V1M7 3L11 3", muted: true },
  { label: "saF8", d: "M2 1V5H5M5 1V9M13 1V9M13 5H16V1M9 9V1M7 7L11 7", muted: true },
  { label: "|", sep: true },
  { label: "aF5", d: "M9 10V1M6 4L9 1L12 4" },
  { label: "caF5", d: "M9 0V9M6 6L9 9L12 6" },
  { label: "caF10", d: "M1 6H6M6 8L12 3M12 6H17" },
  { label: "F10", d: "M3 1V9H16" },
  { label: "aF9", d: "M3 1H11M7 1V9", cross: true },
];

const KeyButton = ({ k }: { k: KeyDef }) => (
  <KeySlot>
    <svg width="18" height="10" viewBox="0 0 18 10" style={{ flex: "none" }}>
      {k.d && <path d={k.d} fill="none" stroke={k.muted ? "#a8a8b4" : "#222"} />}
      {k.cross && <path d="M5 0L13 9M13 0L5 9" stroke="#e0242a" strokeWidth="1.7" />}
    </svg>
    <KeyLabel $muted={k.muted}>{k.label}</KeyLabel>
  </KeySlot>
);

/* ladder drawing */
type Rung = {
  y: number;
  from: number;
  to: number;
  step?: string;
  device?: string;
  edge?: boolean;
  bracket: number;
  cmd: string[];
};
const LEFT_RAIL = 268.5;
const BRANCH = 348.5;
const RIGHT_RAIL = 1238.5;
const CONTACT = 301;
const RUNGS: Rung[] = [
  { y: 162, from: LEFT_RAIL, to: 986, step: "0", device: "M8002", edge: true, bracket: 986, cmd: ["MOV", "K121", "D510"] },
  { y: 308, from: LEFT_RAIL, to: 1066, step: "7", device: "M8002", edge: true, bracket: 1066, cmd: ["RST", "M11"] },
  { y: 455, from: LEFT_RAIL, to: 1066, device: "S1", bracket: 1066, cmd: ["RST", "M26"] },
  { y: 602, from: BRANCH, to: 1066, bracket: 1066, cmd: ["RST", "M1"] },
  { y: 749, from: BRANCH, to: 986, bracket: 986, cmd: ["ZRST", "M10", "M20"] },
  { y: 897, from: BRANCH, to: 986, bracket: 986, cmd: ["MOV", "K0", "D530"] },
];

const RungLine = ({ r }: { r: Rung }) => {
  const y = r.y + 0.5;
  const wide = r.bracket === 986;
  const xs = wide ? [r.bracket + 7, r.bracket + 79, r.bracket + 164] : [r.bracket + 7, r.bracket + 84];
  return (
    <g>
      {r.device ? (
        <>
          <path d={`M${r.from} ${y}H${CONTACT}M${CONTACT + 12} ${y}H${r.to}`} stroke="#000" fill="none" />
          <path d={`M${CONTACT + 0.5} ${r.y - 10}v20M${CONTACT + 12.5} ${r.y - 10}v20`} stroke="#000" fill="none" />
          {r.edge && (
            <>
              <path d={`M${CONTACT + 6.5} ${r.y - 8}v18`} stroke="#000" fill="none" />
              <path d={`M${CONTACT + 3.5} ${r.y - 3}l3 -6l3 6z`} fill="#000" />
            </>
          )}
          <text x={CONTACT + 6.5} y={r.y - 19} textAnchor="middle" fill="#222">{r.device}</text>
        </>
      ) : (
        <path d={`M${r.from} ${y}H${r.to}`} stroke="#000" fill="none" />
      )}
      {r.step && <text x={263} y={r.y + 1} textAnchor="end" fill="#222">{r.step}</text>}
      <path d={`M${r.bracket + 5} ${r.y - 10}h-5v20h5`} stroke="#000" fill="none" transform="translate(0.5 0.5)" />
      <path d={`M1230 ${r.y - 10}h5v20h-5`} stroke="#000" fill="none" transform="translate(0.5 0.5)" />
      {r.cmd.map((c, i) => (
        <text key={c} x={xs[i] + (c === "M10" ? -2 : 0)} y={r.y + 1} fill="#222">{c}</text>
      ))}
    </g>
  );
};

const MENU = [
  ["P", "roject"], ["E", "dit"], ["F", "ind/Replace"], ["C", "ompile"], ["V", "iew"], ["O", "nline"],
  ["De", "bug", "b"], ["D", "iagnostics"], ["T", "ool"], ["W", "indow"], ["H", "elp"],
];

const MiniX = ({ size = 9, w = 1.6 }: { size?: number; w?: number }) => (
  <svg width={size} height={size} viewBox="0 0 9 9">
    <path d="M1 1L8 8M8 1L1 8" stroke="#111" strokeWidth={w} />
  </svg>
);

const AppLogo = () => (
  <svg width="16" height="16" viewBox="0 0 16 16" style={{ marginTop: -3 }}>
    <rect width="16" height="16" fill="#c5352c" />
    <path d="M3 3h4v4H3zM9 3h4v4H9zM3 9h4v4H3zM9 9h4v4H9z" fill="none" stroke="#f6d8d0" />
  </svg>
);

export default function App() {
  return (
    <Page>
      <GlobalStyle />
      <TitleBar>
        <TaskStrip />
        <AppLogo />
        <TitleText>MELSOFT Series GX Works2 ...rk\BB5s2-mayhap\Phun-suong\Vantu-100I\BB5s2.gxw - [[PRG]Write MAIN 1421 Step]</TitleText>
        <WindowButtons>
          <WindowButton>
            <svg width="11" height="11" viewBox="0 0 11 11"><path d="M0 5.5H10" stroke="#222" /></svg>
          </WindowButton>
          <WindowButton>
            <svg width="11" height="11" viewBox="0 0 11 11"><path d="M0.5 2.5h8v8h-8zM2.5 2.5v-2h8v8h-2" fill="none" stroke="#222" /></svg>
          </WindowButton>
          <WindowButton>
            <svg width="12" height="12" viewBox="0 0 12 12"><path d="M1 1L11 11M11 1L1 11" stroke="#222" /></svg>
          </WindowButton>
        </WindowButtons>
      </TitleBar>

      <MenuBar>
        <Grip />
        {MENU.map(([a, b, c]) => {
          const name = a + b;
          return (
            <MenuItem key={name} $active={name === "Tool"}>
              {c ? <>De<u>b</u>ug</> : <><u>{a}</u>{b}</>}
            </MenuItem>
          );
        })}
        <MdiButtons>
          <svg width="10" height="10" viewBox="0 0 10 10"><path d="M2 8h6" stroke="#111" strokeWidth="2" /></svg>
          <svg width="10" height="10" viewBox="0 0 10 10"><path d="M0.5 3.5h6v6h-6zM3.5 3V0.5h6v6H7" fill="none" stroke="#111" /><path d="M1 3h6M4 1h5" stroke="#111" /></svg>
          <MiniX size={10} />
        </MdiButtons>
      </MenuBar>

      <ToolRow>
        <Toolbar $gap={3.5}>
          <Grip />
          <Tools items={["new", "open", "save", "print", "|", "help"]} />
          <Combo $w={97} $ml={1}>
            <span />
            <ComboArrow />
          </Combo>
          <Overflow $ml={3} />
        </Toolbar>
        <Toolbar $gap={8}>
          <Grip />
          <Tools items={["cut", "copy", "paste", "undo", "redo", "|", "devFind", "gotoFind", "ladderFind", "|", "writeTo", "readFrom", "verifyG", "verifyR", "greyA", "greyB", "|", "devDown", "devUp", "|", "pageOff", "greySquares", "orangeDocs", "|", "monitor"]} />
          <Overflow />
        </Toolbar>
        <Toolbar $gap={0}>
          <Grip />
          <Tools items={["wave1", "wave2", "wave3", "|", "lensOff", "docOff", "|", "wave1", "wave2"]} />
          <Overflow />
        </Toolbar>
      </ToolRow>

      <ToolRow>
        <Toolbar $gap={4}>
          <Grip />
          <Slot $active $w={21}><Icon name="tree" /></Slot>
          <Sep $w={7} />
          <Tools items={["chip", "|", "list", "|", "devFind", "devGrid", "devNet", "|"]} />
          <Slot $w={28}><Icon name="devEye" /><Caret /></Slot>
          <Slot $w={28}><Icon name="probe" /><Caret /></Slot>
          <Sep $w={7} />
          <Slot><Icon name="helpOff" /></Slot>
          <Sep $w={8} />
          <Slot><Icon name="bino" /></Slot>
          <Combo $w={204} $ml={1}>
            Parameter
            <ComboArrow />
          </Combo>
          <Combo $w={199} $ml={2}>
            <span />
            <ComboArrow />
          </Combo>
          <Slot $w={24}><Icon name="docTag" /></Slot>
          <Overflow />
        </Toolbar>
        <Toolbar $gap={0}>
          <Grip />
          {KEYS.map((k, i) => (k.sep ? <Sep key={i} /> : <KeyButton key={k.label} k={k} />))}
          <Sep />
          <Tools items={["st", "|", "editRung", "noteA", "noteB", "|", "noteC", "|", "noteD", "|", "pageOff", "watchOff", "lensOff2", "|", "contacts"]} />
          <Slot $active><Icon name="contactsPin" /></Slot>
          <Tools items={["docLens", "docPin", "watchGrey", "zoom"]} />
          <Overflow />
        </Toolbar>
      </ToolRow>

      <Main>
        <Nav>
          <NavHeader>
            <Grip />
            <NavTitle>Navigation</NavTitle>
            <NavClose>
              <svg width="10" height="11" viewBox="0 0 10 11"><path d="M3 1h4v5h2v1H1V6h2zM5 7v4" fill="#222" stroke="#222" strokeWidth=".4" /></svg>
              <MiniX />
            </NavClose>
          </NavHeader>
          <ProjectHeader>Project</ProjectHeader>
          <NavTools>
            <Tools items={["addItem", "copySheet", "paste", "infoDoc", "refreshDoc"]} />
            <Sep />
            <Slot $w={26}><Icon name="project" /><Caret /></Slot>
          </NavTools>
          <Tree>
            <TreeRow>
              <Guide $down $right><Plus /></Guide>
              <TreeIcon><Icon name="parameter" size={17} /></TreeIcon>Parameter
            </TreeRow>
            <TreeRow>
              <Guide $up $down $right />
              <TreeIcon><Icon name="plcFolder" size={17} /></TreeIcon>Special Module(Intelligent
            </TreeRow>
            <TreeRow>
              <Guide $up $down $right />
              <TreeIcon><Icon name="globeDoc" size={17} /></TreeIcon>Global Device Comment
            </TreeRow>
            <TreeRow>
              <Guide $up $down $right><Plus /></Guide>
              <TreeIcon><Icon name="programSetting" size={17} /></TreeIcon>Program Setting
            </TreeRow>
            <TreeRow>
              <Guide $up $right><Expander /></Guide>
              <TreeIcon><Icon name="pou" size={17} /></TreeIcon>POU
            </TreeRow>
            <TreeRow>
              <Guide />
              <Guide $down $right><Expander /></Guide>
              <TreeIcon><Icon name="folderSheet" size={17} /></TreeIcon>Program
            </TreeRow>
            <TreeRow>
              <Guide />
              <Guide $up $down />
              <Guide $right />
              <TreeIcon><Icon name="programDoc" size={17} /></TreeIcon>MAIN
            </TreeRow>
            <TreeRow>
              <Guide />
              <Guide $up $right />
              <TreeIcon><Icon name="folderSheet" size={17} /></TreeIcon>Local Device Commen
            </TreeRow>
            <TreeRow>
              <Guide $right><Plus /></Guide>
              <TreeIcon><Icon name="deviceMemory" size={17} /></TreeIcon>Device Memory
            </TreeRow>
          </Tree>
          <HScroll>
            <ScrollArrow />
            <HThumb />
            <ScrollArrow $right />
          </HScroll>
          <PaneGrip />
          <PaneButton $active><Icon name="project" size={23} />Project</PaneButton>
          <PaneButton>
            <svg width="23" height="23" viewBox="0 0 23 23" style={{ flex: "none" }}>
              <path d="M1 4q5-2 10 1 5-3 10-1v13q-5-2-10 1-5-3-10-1z" fill="#f4eedc" stroke="#8a7c58" />
              <path d="M15 13h5l2 9h-7z" fill="#d8c040" />
            </svg>
            User Library
          </PaneButton>
          <PaneButton>
            <svg width="23" height="23" viewBox="0 0 23 23" style={{ flex: "none" }}>
              <rect x="1" y="4" width="15" height="12" fill="#2ea6b8" stroke="#0b4a66" />
              <rect x="8" y="1" width="13" height="11" fill="#3db4e4" stroke="#0b4a66" />
              <rect x="11" y="6" width="10" height="16" fill="#333" />
              <path d="M12 14h8M12 17h8" stroke="#bbb" />
            </svg>
            Connection Destination
          </PaneButton>
          <PaneFooter>
            <svg width="12" height="16" viewBox="0 0 12 16">
              <path d="M2 1l3 3-3 3M6 1l3 3-3 3" fill="none" stroke="#111" strokeWidth="1.2" />
              <path d="M3 11h6l-3 3.5z" fill="#111" />
            </svg>
          </PaneFooter>
        </Nav>
        <Gutter />
        <Workspace>
          <TabStrip>
            <ActiveTab>
              <Icon name="programDoc" />
              <TabText>[PRG]Write MAIN 1421 Step</TabText>
              <TabClose><MiniX size={8} w={1.4} /></TabClose>
            </ActiveTab>
            <Tab>
              <Icon name="globeDoc" />
              Device Comment COMMENT
            </Tab>
            <TabNav>
              <svg width="7" height="11" viewBox="0 0 7 11"><path d="M6 1L1 5.5L6 10z" fill="#ccc" stroke="#111" /></svg>
              <svg width="7" height="11" viewBox="0 0 7 11"><path d="M1 1L6 5.5L1 10z" fill="#fff" stroke="#111" /></svg>
              <svg width="9" height="6" viewBox="0 0 9 6"><path d="M0 0h9L4.5 5.5z" fill="#111" /></svg>
            </TabNav>
          </TabStrip>
          <Editor>
            <LadderSvg viewBox="186 129 1711 898" preserveAspectRatio="xMinYMin meet">
              <path d={`M${LEFT_RAIL} 129V1027M${RIGHT_RAIL} 129V1027M${BRANCH} 308V1027`} stroke="#000" fill="none" />
              {RUNGS.map((r) => (
                <RungLine key={r.y} r={r} />
              ))}
              <rect x="746" y="130" width="77" height="145" fill="none" stroke="#14146e" strokeWidth="2" />
            </LadderSvg>
            <VScroll>
              <VArrow />
              <VThumb />
              <VArrow $down />
            </VScroll>
          </Editor>
        </Workspace>
      </Main>

      <StatusBar>
        <span />
        <StatusPane>English</StatusPane>
        <StatusPane>Unlabeled</StatusPane>
        <StatusPane $line />
        <StatusPane>FX3U/FX3UC</StatusPane>
        <StatusPane>Host</StatusPane>
        <StatusPane>2/1421Step</StatusPane>
        <StatusPane>Ovrwrte</StatusPane>
        <StatusPane $muted $line>CAP</StatusPane>
        <StatusPane $line>NUM</StatusPane>
      </StatusBar>
    </Page>
  );
}
